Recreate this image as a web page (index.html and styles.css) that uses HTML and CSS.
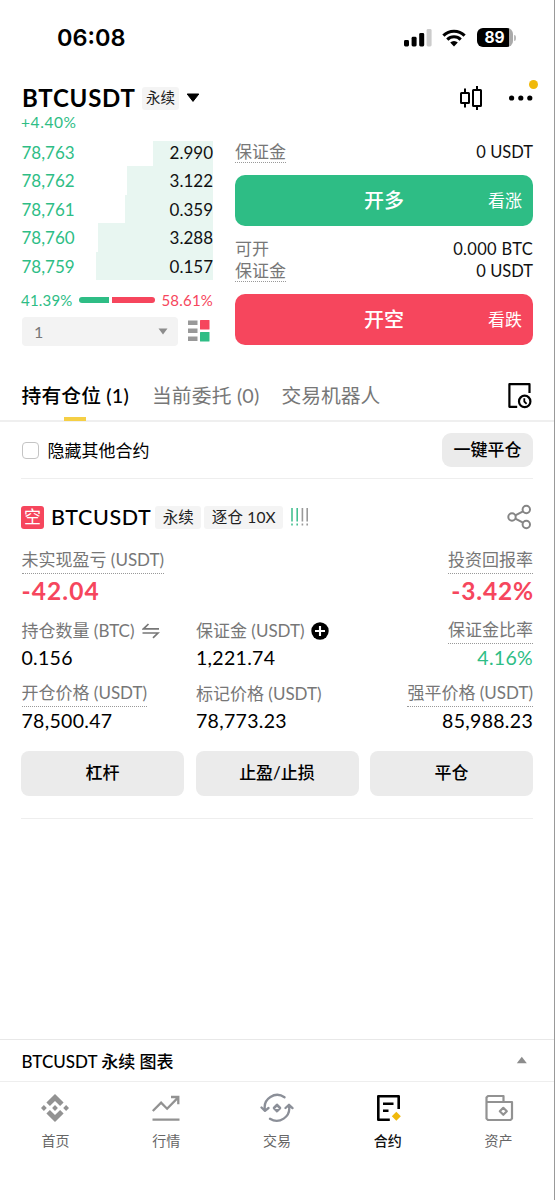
FILE: index.html
```html
<!DOCTYPE html>
<html lang="zh-CN">
<head>
<meta charset="utf-8">
<title>BTCUSDT 永续</title>
<link rel="stylesheet" href="styles.css">
</head>
<body>
<div class="screen">
  <div class="status">
    <span class="time">06:08</span>
    <div class="status-icons">
      <svg class="signal" width="28" height="18" viewBox="0 0 28 18"><g fill="#000"><rect x="0" y="11" width="5" height="6.5" rx="1.4"/><rect x="7.6" y="7.8" width="5" height="9.7" rx="1.4"/><rect x="15.2" y="4" width="5" height="13.5" rx="1.4"/></g><rect x="22.6" y="0" width="5" height="17.5" rx="1.4" fill="#ccc"/></svg>
      <svg class="wifi" width="24" height="18" viewBox="0 0 24 18"><g fill="none" stroke="#000" stroke-width="3.1"><path d="M1.4 6.6A15 15 0 0 1 22.6 6.6"/><path d="M5.3 10.6A9.4 9.4 0 0 1 18.7 10.6"/></g><path d="M8.2 13.6A5.4 5.4 0 0 1 15.8 13.6L12 17.5Z" fill="#000"/></svg>
      <span class="battery"><span class="battery-level">89</span><span class="battery-tip"></span></span>
    </div>
  </div>

  <header class="head">
    <h1 class="symbol">BTCUSDT</h1>
    <span class="tag tag-head">永续</span>
    <svg width="14" height="10" viewBox="0 0 14 10"><path d="M1.2 1h11.6L7 8.4Z" fill="#000" stroke="#000" stroke-linejoin="round"/></svg>
    <div class="head-actions">
      <svg width="24" height="26" viewBox="0 0 24 26" fill="none" stroke="#000" stroke-width="2"><rect x="2" y="8" width="8" height="10" rx=".5"/><path d="M6 3.500V8M6 18v4.500M18 1v4M18 21v4"/><rect x="14" y="5" width="8" height="16" rx=".5"/></svg>
      <span class="more"><svg width="26" height="6" viewBox="0 0 26 6"><circle cx="3.600" cy="3" r="2.600"/><circle cx="12.800" cy="3" r="2.600"/><circle cx="21.800" cy="3" r="2.600"/></svg><i class="dot"></i></span>
    </div>
  </header>
  <div class="change">+4.40%</div>

  <main class="trade">
    <section class="book">
      <div class="book-row"><span class="price">78,763</span><span class="qty" style="width:60px">2.990</span></div>
      <div class="book-row"><span class="price">78,762</span><span class="qty" style="width:86px">3.122</span></div>
      <div class="book-row"><span class="price">78,761</span><span class="qty" style="width:88.500px">0.359</span></div>
      <div class="book-row"><span class="price">78,760</span><span class="qty" style="width:115.500px">3.288</span></div>
      <div class="book-row"><span class="price">78,759</span><span class="qty" style="width:117px">0.157</span></div>
      <div class="ratio"><span class="up">41.39%</span><i class="bar buy"></i><i class="bar sell"></i><span class="down">58.61%</span></div>
      <div class="depth">
        <div class="select"><span>1</span><svg width="10" height="7" viewBox="0 0 10 7"><path d="M.5.5h9L5 6.500Z" fill="#8c8c8c"/></svg></div>
        <svg width="22" height="22" viewBox="0 0 22 22"><g fill="#999"><rect x="0" y=".5" width="9.500" height="4.500"/><rect x="0" y="8.500" width="9.500" height="4.500"/><rect x="0" y="16.500" width="9.500" height="4.500"/></g><rect x="12" y="0" width="9.500" height="9.500" rx=".5" fill="#f6465d"/><rect x="12" y="12" width="9.500" height="9.500" rx=".5" fill="#2ebd85"/></svg>
      </div>
    </section>
    <section class="order">
      <div class="info"><span class="dotted">保证金</span><b>0 USDT</b></div>
      <div class="big long"><span>开多</span><em>看涨</em></div>
      <div class="info"><span>可开</span><b class="btc">0.000 BTC</b></div>
      <div class="info"><span class="dotted">保证金</span><b>0 USDT</b></div>
      <div class="big short"><span>开空</span><em>看跌</em></div>
    </section>
  </main>

  <nav class="tabs">
    <span class="tab active">持有仓位 (1)</span>
    <span class="tab second">当前委托 (0)</span>
    <span class="tab third">交易机器人</span>
    <svg class="history" width="26" height="28" viewBox="0 0 26 28" fill="none" stroke="#000" stroke-width="2.200" stroke-linejoin="round"><path d="M22.500 11V2.200H2.400v22.600h7.800"/><circle cx="17.700" cy="19.400" r="5.700"/><path d="M17.300 16.300v3.200l2.300 2.300" stroke-width="1.800"/></svg>
  </nav>

  <div class="filter">
    <i class="check"></i><span class="filter-text">隐藏其他合约</span>
    <span class="close-all">一键平仓</span>
  </div>

  <section class="position">
    <div class="pos-head">
      <span class="side">空</span><h2 class="pos-symbol">BTCUSDT</h2>
      <span class="tag">永续</span><span class="tag lever">逐仓 10X</span>
      <svg class="risk" width="20" height="20" viewBox="0 0 20 20" stroke-width="1.600" fill="none"><path stroke="#45c092" stroke-dasharray="13.500 2 2 9" d="M2 1v18M7.200 1v18"/><path stroke="#999" stroke-dasharray="13.500 2 2 9" d="M12.400 1v18M17.200 1v18"/></svg>
      <svg class="share" width="26" height="26" viewBox="0 0 26 26" fill="none" stroke="#858585" stroke-width="2"><circle cx="5" cy="13" r="3.700"/><circle cx="19.300" cy="5.500" r="3.700"/><circle cx="19.300" cy="20.500" r="3.700"/><path d="M8.300 11.300l7.700-4M8.300 14.700l7.700 4"/></svg>
    </div>
    <div class="pnl">
      <div><span class="label dotted">未实现盈亏 (USDT)</span><strong class="loss">-42.04</strong></div>
      <div class="right"><span class="label dotted">投资回报率</span><strong class="loss rate">-3.42%</strong></div>
    </div>
    <div class="grid amounts">
      <div><span class="label">持仓数量 (BTC)<svg class="swap" width="18" height="16" viewBox="0 0 18 16" fill="none" stroke="#777" stroke-width="1.700"><path d="M6.500 1L1.500 5.800H17M.5 10h15.500l-5 4.800"/></svg></span><span class="value">0.156</span></div>
      <div><span class="label">保证金 (USDT)<svg class="plus" width="18" height="18" viewBox="0 0 18 18"><circle cx="9" cy="9" r="8.700"/><path d="M9 4v10M4 9h10" stroke="#fff" stroke-width="2.100"/></svg></span><span class="value">1,221.74</span></div>
      <div class="right"><span class="label dotted">保证金比率</span><span class="value up">4.16%</span></div>
    </div>
    <div class="grid prices">
      <div><span class="label dotted">开仓价格 (USDT)</span><span class="value">78,500.47</span></div>
      <div><span class="label">标记价格 (USDT)</span><span class="value">78,773.23</span></div>
      <div class="right"><span class="label dotted">强平价格 (USDT)</span><span class="value">85,988.23</span></div>
    </div>
    <div class="grid actions"><span>杠杆</span><span>止盈/止损</span><span>平仓</span></div>
  </section>

  <footer class="foot">
    <div class="chart-bar"><span>BTCUSDT 永续 图表</span><svg width="12" height="8" viewBox="0 0 12 8"><path d="M.8 7.200h10L5.800.8Z" fill="#8c8c8c"/></svg></div>
    <nav class="nav">
      <a><svg viewBox="0 0 30 30" fill="#929292"><path d="M15 1l8.600 8.600-3.500 3.500L15 8l-5.100 5.100-3.500-3.500Z"/><path d="M15 29l8.600-8.600-3.500-3.500L15 22l-5.100-5.100-3.500 3.500Z"/><path d="M15 12.100l2.900 2.900-2.900 2.900-2.900-2.900Z"/><path d="M3.900 12.100L6.800 15l-2.900 2.900L1 15ZM26.100 12.100L29 15l-2.900 2.900-2.900-2.900Z"/></svg>首页</a>
      <a><svg viewBox="0 0 30 30" fill="none" stroke="#929292" stroke-width="2.300"><path d="M1.800 18l8.300-8.300 6 6L27 4.600M20 4h7.300v7.300M1.500 26.700h27"/></svg>行情</a>
      <a><svg viewBox="0 0 34 30" fill="none" stroke="#8b8f98" stroke-width="2.300" stroke-linecap="round" stroke-linejoin="round"><path d="M24.500 4.300A12.500 12.500 0 0 0 5 17M1.500 14.500L5 17.800 8.500 15M10 25.800A12.500 12.500 0 0 0 29 13M25.500 15L29 11.800l3.500 3.300"/><path d="M17 11.800l3 3.200-3 3.200-3-3.200Z" stroke-width="2.600"/></svg>交易</a>
      <a class="current"><svg viewBox="0 0 30 30" fill="none" stroke="#000" stroke-width="2.600" stroke-linejoin="round"><path d="M25.700 16V3.300H5.300v23.400h11.500M10 10.800h10.500M10 17.800h5.500"/><path d="M23.300 18.800l4.500 4.500-4.500 4.500-4.500-4.500Z" fill="#f0b90b" stroke="none"/></svg>合约</a>
      <a><svg viewBox="0 0 30 30" fill="none" stroke="#929292" stroke-width="2.200" stroke-linejoin="round"><path d="M2.500 9V4.500l1.500-1.500H19.500v6M2.500 9h25.500v16.500l-1.500 1.500H4l-1.500-1.500Z"/><path d="M19.300 14.800l3.500 3.500-3.500 3.500-3.500-3.500Z"/></svg>资产</a>
    </nav>
  </footer>
</div>
</body>
</html>
```
FILE: styles.css
```css
* { box-sizing: border-box; }
body { margin: 0; background: #fff; color: #111; font-family: Lato, "Noto Sans CJK SC", sans-serif; font-size: 17px; }
h1, h2 { margin: 0; }
svg { display: block; flex: none; }
.screen { width: 555px; height: 1200px; display: flex; flex-direction: column; border-right: 1px solid #999; overflow: hidden; }
.up { color: #2ebd85; }
.down { color: #f6465d; }

.status { height: 75px; padding: 0 38px 0 57px; display: flex; justify-content: space-between; align-items: center; }
.time { font: 600 23.5px/30px Inter, sans-serif; color: #000; }
.status-icons { display: flex; align-items: center; }
.wifi { margin-left: 10px; }
.battery { margin-left: 11px; display: flex; align-items: center; gap: 1px; }
.battery-level { width: 36px; height: 19px; border-radius: 6px; background: linear-gradient(90deg, #000 31.5px, #aaa 31.5px); color: #fff; font: 700 15.5px/19px Inter, sans-serif; text-align: center; padding-right: 1px; }
.battery-tip { width: 2px; height: 6px; border-radius: 0 2px 2px 0; background: #bbb; }

.head { height: 36px; margin-top: 5px; padding: 0 20px 0 22px; display: flex; align-items: center; }
.symbol { font-size: 24px; font-weight: 700; line-height: 36px; color: #000; letter-spacing: .75px; }
.tag { background: #f4f4f4; border-radius: 3px; color: #222; font-size: 15.5px; line-height: 22px; height: 23px; padding: 0 7.5px; }
.tag-head { margin: 0 7px 0 6.5px; padding: 0 4px; font-size: 14.5px; }
.head-actions { margin-left: auto; display: flex; align-items: center; gap: 25px; }
.more { position: relative; }
.dot { position: absolute; width: 9px; height: 9px; border-radius: 50%; background: #f0b90b; right: -4px; top: -15px; }
.change { height: 22px; margin-top: -4px; padding-left: 21px; line-height: 20px; font-size: 15.5px; letter-spacing: .6px; color: #2ebd85; }

.trade { height: 216px; margin-top: 4px; padding: 0 21px; display: grid; grid-template-columns: 192px 298px; gap: 22px; }
.book-row { height: 28.4px; display: flex; justify-content: space-between; line-height: 29.5px; font-size: 17px; padding-left: .5px; }
.book-row:first-child .qty { border-top: 3px solid #fff; line-height: 23.5px; }
.price { color: #2ebd85; }
.qty { background: #e8f6f1; text-align: right; }
.ratio { height: 37px; padding-top: 3px; display: flex; align-items: center; font-size: 15px; letter-spacing: .2px; }
.bar { height: 6px; }
.buy { width: 31px; margin-left: 6.5px; background: #2ebd85; border-radius: 3px 0 0 3px; }
.sell { width: 44px; margin: 0 6px 0 3px; background: #f6465d; border-radius: 0 3px 3px 0; }
.depth { display: flex; align-items: center; gap: 10px; padding-left: 1px; }
.select { width: 156px; height: 29px; border-radius: 4px; background: #f3f3f3; color: #777; padding: 0 10px 0 12px; display: flex; justify-content: space-between; align-items: center; font-size: 16px; }
.order { display: flex; flex-direction: column; padding-top: 3px; }
.info { display: flex; justify-content: space-between; height: 22px; line-height: 22px; color: #777; }
.info b { font-size: 16.5px; font-weight: 400; color: #111; }
.info .btc { letter-spacing: .3px; }
.dotted { border-bottom: 1px dotted #999; }
.big { flex: none; height: 51px; border-radius: 10px; display: flex; align-items: center; justify-content: center; position: relative; color: #fff; font-size: 20px; font-weight: 500; margin: 12px 0; padding-bottom: 2px; }
.big em { position: absolute; right: 11px; font-style: normal; font-weight: 400; font-size: 17px; }
.long { background: #2ebd85; }
.short { background: #f6465d; }

.tabs { height: 52px; margin-top: 16px; padding: 0 21px 0 21.5px; display: flex; border-bottom: 2px solid #efefef; color: #777; font-size: 19.8px; line-height: 51px; }
.tab { height: 52px; }
.active { color: #000; font-weight: 500; position: relative; letter-spacing: .15px; }
.active::after { content: ""; position: absolute; left: 50%; margin-left: -11px; bottom: 1px; width: 22px; height: 4px; background: #f5cf45; }
.second { margin-left: 23px; letter-spacing: .15px; }
.third { margin-left: 22px; }
.history { margin: 12px 0 0 auto; }

.filter { height: 57px; margin: 0 21px; border-bottom: 1px solid #eee; display: flex; align-items: center; color: #000; }
.check { width: 17px; height: 17px; margin-left: .5px; border: 1.5px solid #c4c4c4; border-radius: 4px; }
.filter-text { margin: 0 0 2px 9px; }
.close-all { margin-left: auto; width: 91px; height: 34px; border-radius: 9px; background: #ebebeb; line-height: 34px; text-align: center; font-weight: 500; }

.position { margin: 0 21px; height: 340px; border-bottom: 1px solid #eee; padding-top: 18px; }
.pos-head { height: 40px; display: flex; align-items: center; }
.side { width: 23px; height: 23px; border-radius: 3px; background: #f6465d; color: #fff; line-height: 22px; text-align: center; font-size: 17px; }
.pos-symbol { margin: 0 4px 0 7px; font-size: 21.5px; font-weight: 500; line-height: 36px; letter-spacing: .6px; color: #000; }
.lever { margin: 0 7px 0 3px; letter-spacing: .15px; }
.share { margin-left: auto; }
.pnl { display: flex; justify-content: space-between; margin-top: 10px; }
.pnl > div, .grid > div { display: flex; flex-direction: column; align-items: flex-start; padding-left: .5px; }
.pnl > .right, .grid > .right { align-items: flex-end; padding-left: 0; }
.label { height: 27px; line-height: 26px; color: #777; display: flex; align-items: center; white-space: pre; }
.loss { color: #f6465d; font-size: 24.5px; line-height: 34px; height: 34px; letter-spacing: 1.1px; }
.rate { letter-spacing: .8px; margin-right: -.8px; }
.grid { display: grid; grid-template-columns: repeat(3, 163px); justify-content: space-between; }
.amounts { margin-top: 9px; }
.amounts .value { line-height: 28px; }
.value { font-size: 19.5px; line-height: 27px; height: 26px; letter-spacing: .3px; }
.amounts .value { height: 28px; }
.value:not(.up) { color: #000; }
.swap { margin-left: 7px; }
.plus { margin-left: 6.5px; }
.prices { margin-top: 8px; }
.actions { margin-top: 18px; }
.actions span { height: 45px; border-radius: 8px; background: #ebebeb; line-height: 44px; text-align: center; font-weight: 500; color: #000; }

.foot { margin-top: auto; height: 161px; border-top: 1px solid #e8e8e8; }
.chart-bar { height: 42px; border-bottom: 1px solid #eee; padding: 0 26px 1px 21.5px; display: flex; justify-content: space-between; align-items: center; font-weight: 500; color: #000; }
.nav { display: grid; grid-template-columns: repeat(5, 1fr); padding-top: 11px; }
.nav a { display: flex; flex-direction: column; align-items: center; gap: 6px; font-size: 14px; line-height: 24px; color: #666; }
.nav svg { height: 30px; width: 34px; }
.nav .current { color: #111; font-weight: 500; }
```
